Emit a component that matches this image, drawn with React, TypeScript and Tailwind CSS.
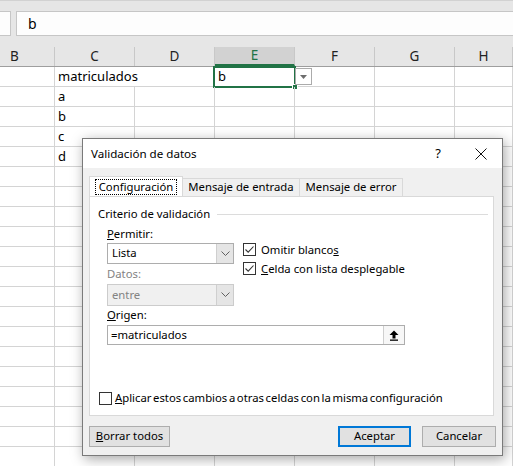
import React from 'react';

const COLS = ['w-[55px]', 'w-[80px]', 'w-[80px]', 'w-[80px]', 'w-[80px]', 'w-[80px]', 'flex-1'];
const LETTERS = ['B', 'C', 'D', 'E', 'F', 'G', 'H'];

const DATA: Record<number, string[]> = {
  0: ['', 'matriculados', '', 'b'],
  1: ['', 'a'],
  2: ['', 'b'],
  3: ['', 'c'],
  4: ['', 'd'],
};

function Chevron() {
  return (
    <svg width="9" height="6" viewBox="0 0 9 6" className="text-[#606060]">
      <path d="M0.5 0.5 L4.5 4.5 L8.5 0.5" fill="none" stroke="currentColor" strokeWidth="1" />
    </svg>
  );
}

function CheckBox({ checked }: { checked?: boolean }) {
  return (
    <span className="w-[13px] h-[13px] border border-[#333] bg-white flex items-center justify-center shrink-0">
      {checked && (
        <svg width="11" height="11" viewBox="0 0 11 11">
          <path d="M1.5 5.5 L4.2 8.2 L9.5 2.5" fill="none" stroke="#333" strokeWidth="1.1" />
        </svg>
      )}
    </span>
  );
}

function Select({ value, disabled }: { value: string; disabled?: boolean }) {
  return (
    <div
      className={`flex w-full h-full border ${disabled ? 'border-[#cccccc] bg-[#f0f0f0] text-[#838383]' : 'border-[#adadad] bg-white'}`}
    >
      <span className="flex-1 flex items-center pl-[4px]">{value}</span>
      <span className="w-[17px] bg-[#e5e5e5] border-l border-[#cfcfcf] flex items-center justify-center">
        <Chevron />
      </span>
    </div>
  );
}

function Sheet() {
  return (
    <div className="flex flex-col">
      <div className="h-[11px] bg-[#e6e6e6] border-t border-[#d2d2d2]" />
      <div className="h-[25px] bg-[#e6e6e6] flex">
        <div className="w-[11px] bg-[#fdfdfd] border border-l-0 border-[#c6c6c6]" />
        <div className="flex-1 ml-[5px] bg-[#fdfdfd] border border-r-0 border-[#c6c6c6] flex items-center pl-[11px] text-[14px]">
          b
        </div>
      </div>
      <div className="h-[11px] bg-[#e6e6e6]" />
      <div className="h-[20px] flex bg-[#e6e6e6] border-b border-[#9e9e9e] text-[13.5px] text-[#222]">
        {LETTERS.map((l, i) => (
          <div
            key={l}
            className={`${COLS[i]} flex items-center justify-center border-r border-[#c8c8c8] ${
              l === 'E' ? 'bg-[#d2d2d2] text-[#217346] border-b-2 border-b-[#217346]' : ''
            } ${i === 0 ? 'pl-[25px] justify-start' : ''}`}
          >
            {i === 0 ? <span className="ml-[-15px]">{l}</span> : l}
          </div>
        ))}
      </div>
      {Array.from({ length: 20 }).map((_, r) => (
        <div key={r} className="h-[20px] flex border-b border-[#d4d4d4] text-[13px]">
          {COLS.map((w, c) => {
            const val = DATA[r]?.[c] ?? '';
            const overflow = r === 0 && c === 1;
            const selected = r === 0 && c === 3;
            return (
              <div
                key={c}
                className={`${w} relative flex items-center pl-[3px] whitespace-nowrap ${
                  overflow ? 'overflow-visible z-[1]' : 'border-r border-[#d4d4d4]'
                }`}
              >
                {val}
                {selected && (
                  <>
                    <span className="absolute left-[-2px] top-[-1px] right-[-2px] bottom-[-2px] border-2 border-[#217346]" />
                    <span className="absolute right-[-4px] bottom-[-4px] w-[6px] h-[6px] bg-[#217346] border border-white" />
                    <span className="absolute left-[calc(100%+1px)] top-[1px] w-[17px] h-[17px] bg-white border border-[#ababab] flex items-center justify-center z-10">
                      <svg width="7" height="4" viewBox="0 0 7 4">
                        <path d="M0 0 H7 L3.5 4 Z" fill="#6d6d6d" />
                      </svg>
                    </span>
                  </>
                )}
              </div>
            );
          })}
        </div>
      ))}
    </div>
  );
}

function Dialog() {
  return (
    <div className="absolute left-[82px] top-[138px] w-[421px] h-[318px] bg-[#f0f0f0] border border-[#7a7a7a] shadow-[2px_3px_12px_rgba(0,0,0,0.35)] flex flex-col text-[11.3px] text-black">
      <div className="h-[29px] bg-white flex items-center pl-[8px] shrink-0 text-[11.6px]">
        <span>Validación de datos</span>
        <span className="ml-auto mr-[34px] text-[13px]">?</span>
        <svg width="12" height="12" viewBox="0 0 12 12" className="mr-[15px]">
          <path d="M0.5 0.5 L11.5 11.5 M11.5 0.5 L0.5 11.5" stroke="#111" strokeWidth="1" />
        </svg>
      </div>
      <div className="pl-[6px] pr-[8px] pt-[9px] flex flex-col">
        <div className="h-[19px] flex items-end relative z-[1]">
          <div className="w-[94px] h-[20px] bg-white border border-b-0 border-[#d9d9d9] flex items-center justify-center">
            <span className="outline outline-1 outline-dotted outline-black px-[3px] leading-[14px]">Configuración</span>
          </div>
          <div className="w-[117px] h-[18px] bg-[#f0f0f0] border border-l-0 border-b-0 border-[#d9d9d9] flex items-center justify-center">
            Mensaje de entrada
          </div>
          <div className="w-[103px] h-[18px] bg-[#f0f0f0] border border-l-0 border-b-0 border-[#d9d9d9] flex items-center justify-center">
            Mensaje de error
          </div>
        </div>
        <div className="h-[220px] bg-white border border-[#d9d9d9] flex flex-col pt-[9px] pb-[10px]">
          <div className="h-[16px] flex items-center pl-[8px] pr-[5px]">
            <span>Criterio de validación</span>
            <span className="flex-1 ml-[7px] h-px bg-[#dcdcdc]" />
          </div>
          <div className="ml-[17px] mt-[4px] flex">
            <div className="w-[127px] flex flex-col">
              <div className="h-[17px] flex items-center">
                <span><u>P</u>ermitir:</span>
              </div>
              <div className="h-[21px]">
                <Select value="Lista" />
              </div>
              <div className="h-[20px] flex items-center text-[#838383]">Datos:</div>
              <div className="h-[22px]">
                <Select value="entre" disabled />
              </div>
            </div>
            <div className="ml-[9px] pt-[17px] flex flex-col">
              <div className="h-[19px] flex items-start gap-[5px]">
                <CheckBox checked />
                <span className="leading-[13px]">Omitir blanco<u>s</u></span>
              </div>
              <div className="h-[19px] flex items-start gap-[5px]">
                <CheckBox checked />
                <span className="leading-[13px]"><u>C</u>elda con lista desplegable</span>
              </div>
            </div>
          </div>
          <div className="ml-[17px] h-[19px] flex items-center">
            <span><u>O</u>rigen:</span>
          </div>
          <div className="ml-[17px] w-[298px] h-[20px] border border-[#adadad] bg-white flex">
            <span className="flex-1 flex items-center pl-[3px]">=matriculados</span>
            <span className="w-[21px] border-l border-[#cfcfcf] bg-[#f7f7f7] flex items-center justify-center">
              <svg width="10" height="11" viewBox="0 0 10 11">
                <path d="M5 0.5 L9.5 5 H6.5 V8.5 H3.5 V5 H0.5 Z" fill="#000" />
                <rect x="1" y="9.5" width="8" height="1.3" fill="#000" />
              </svg>
            </span>
          </div>
          <div className="mt-auto ml-[9px] h-[13px] flex items-center gap-[3px]">
            <CheckBox />
            <span className="[word-spacing:-1.3px]"><u>A</u>plicar estos cambios a otras celdas con la misma configuración</span>
          </div>
        </div>
        <div className="mt-[10px] h-[21px] flex">
          <button className="w-[81px] h-full bg-[#e1e1e1] border border-[#adadad] flex items-center justify-center">
            <span><u>B</u>orrar todos</span>
          </button>
          <button className="ml-auto w-[73px] h-full bg-[#e1e1e1] border-2 border-[#0078d7] flex items-center justify-center">
            Aceptar
          </button>
          <button className="ml-[11px] mr-[-2px] w-[74px] h-full bg-[#e1e1e1] border border-[#adadad] flex items-center justify-center">
            Cancelar
          </button>
        </div>
      </div>
    </div>
  );
}

export default function App() {
  return (
    <div className="relative w-[513px] h-[466px] overflow-hidden bg-white font-['Noto_Sans','Open_Sans',sans-serif]">
      <Sheet />
      <Dialog />
    </div>
  );
}
